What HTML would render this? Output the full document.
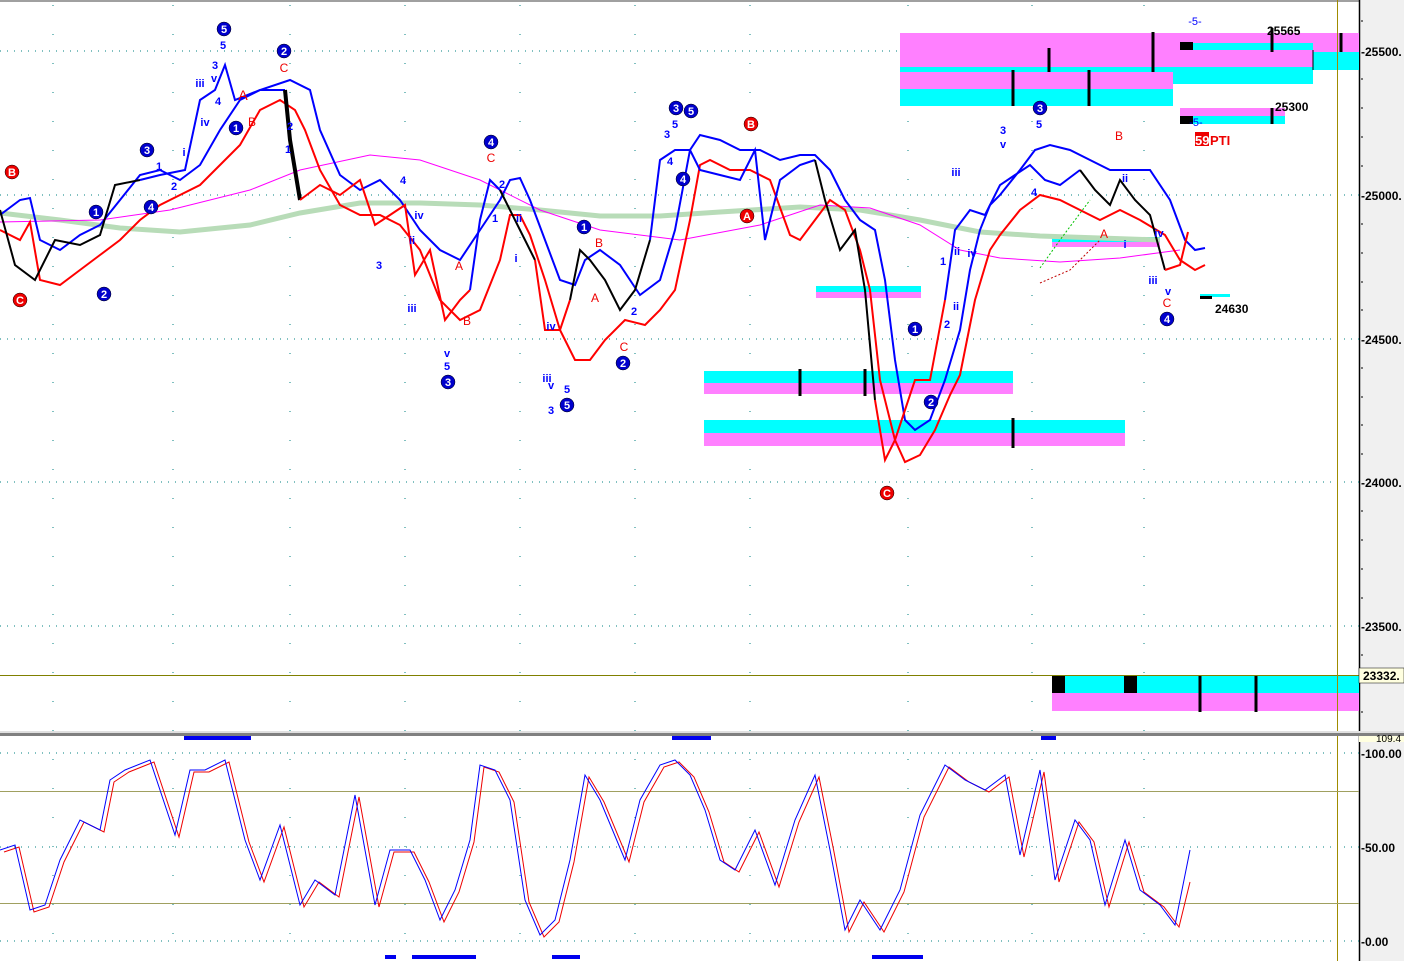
<!DOCTYPE html>
<html><head><meta charset="utf-8"><style>
html,body{margin:0;padding:0;background:#fff;width:1404px;height:961px;overflow:hidden}
svg{display:block}
text{font-family:"Liberation Sans",sans-serif}
</style></head><body>
<svg width="1404" height="961" viewBox="0 0 1404 961" xmlns="http://www.w3.org/2000/svg">
<rect x="0" y="0" width="1404" height="961" fill="#fff"/>
<rect x="0" y="0" width="1404" height="2" fill="#a0a0a0"/>
<rect x="1359" y="0" width="45" height="961" fill="#f0f0f0"/>
<line x1="1359.5" y1="0" x2="1359.5" y2="961" stroke="#000" stroke-width="1.5"/>
<g stroke="#008080" stroke-width="1" stroke-dasharray="1,6">
<line x1="0" y1="51" x2="1359" y2="51"/><line x1="0" y1="195" x2="1359" y2="195"/><line x1="0" y1="339" x2="1359" y2="339"/><line x1="0" y1="482" x2="1359" y2="482"/><line x1="0" y1="626" x2="1359" y2="626"/>
<line x1="0" y1="753" x2="1359" y2="753"/><line x1="0" y1="847" x2="1359" y2="847"/><line x1="0" y1="941" x2="1359" y2="941"/>
</g>
<g stroke="#008080" stroke-width="1" stroke-dasharray="1,28">
<line x1="53" y1="5" x2="53" y2="961"/><line x1="173" y1="5" x2="173" y2="961"/><line x1="290" y1="5" x2="290" y2="961"/><line x1="405" y1="5" x2="405" y2="961"/><line x1="520" y1="5" x2="520" y2="961"/><line x1="635" y1="5" x2="635" y2="961"/><line x1="750" y1="5" x2="750" y2="961"/><line x1="908" y1="5" x2="908" y2="961"/><line x1="1032" y1="5" x2="1032" y2="961"/><line x1="1144" y1="5" x2="1144" y2="961"/>
</g>
<rect x="900" y="33" width="413" height="34" fill="#ff80ff"/>
<rect x="900" y="67" width="273" height="5" fill="#00ffff"/>
<rect x="1173" y="67" width="140" height="17" fill="#00ffff"/>
<rect x="1193" y="43" width="166" height="7" fill="#00ffff"/>
<rect x="1313" y="33" width="46" height="19" fill="#ff80ff"/>
<rect x="1313" y="52" width="46" height="18" fill="#00ffff"/>
<rect x="1180" y="42" width="13" height="8" fill="#000"/>
<rect x="900" y="72" width="273" height="17" fill="#ff80ff"/>
<rect x="900" y="89" width="273" height="17" fill="#00ffff"/>
<rect x="1180" y="108" width="105" height="8" fill="#ff80ff"/>
<rect x="1180" y="116" width="105" height="8" fill="#00ffff"/>
<rect x="1180" y="116" width="13" height="8" fill="#000"/>
<rect x="704" y="371" width="309" height="12" fill="#00ffff"/>
<rect x="704" y="383" width="309" height="11" fill="#ff80ff"/>
<rect x="704" y="420" width="421" height="13" fill="#00ffff"/>
<rect x="704" y="433" width="421" height="13" fill="#ff80ff"/>
<rect x="816" y="286" width="105" height="6" fill="#00ffff"/>
<rect x="816" y="292" width="105" height="6" fill="#ff80ff"/>
<rect x="1052" y="237" width="108" height="5" fill="#00ffff"/>
<rect x="1052" y="242" width="108" height="5" fill="#ff80ff"/>
<rect x="1200" y="294" width="30" height="3" fill="#00ffff"/>
<rect x="1200" y="296" width="12" height="3" fill="#000"/>
<rect x="1052" y="675" width="307" height="18" fill="#00ffff"/>
<rect x="1052" y="693" width="307" height="18" fill="#ff80ff"/>
<rect x="1052" y="675" width="13" height="18" fill="#000"/>
<rect x="1124" y="675" width="13" height="18" fill="#000"/>
<g stroke="#000" stroke-width="3">
<line x1="1013" y1="70" x2="1013" y2="106"/><line x1="1049" y1="48" x2="1049" y2="72"/><line x1="1089" y1="70" x2="1089" y2="106"/><line x1="1153" y1="32" x2="1153" y2="72"/><line x1="1272" y1="28" x2="1272" y2="52"/><line x1="1341" y1="33" x2="1341" y2="52"/><line x1="1272" y1="108" x2="1272" y2="124"/>
<line x1="800" y1="369" x2="800" y2="396"/><line x1="865" y1="369" x2="865" y2="396"/><line x1="1013" y1="418" x2="1013" y2="448"/>
<line x1="1200" y1="675" x2="1200" y2="712"/><line x1="1256" y1="675" x2="1256" y2="712"/>
</g>
<line x1="1313" y1="50" x2="1313" y2="70" stroke="#000" stroke-width="1"/>
<line x1="0" y1="675.5" x2="1359" y2="675.5" stroke="#808000" stroke-width="1"/>
<line x1="1337.5" y1="0" x2="1337.5" y2="961" stroke="#a08c00" stroke-width="1"/>
<polyline fill="none" stroke="#b8dcb8" stroke-width="5" points="0,213 60,220 120,228 180,232 250,225 300,213 360,203 420,203 480,205 540,210 600,216 660,216 720,212 800,207 860,210 920,220 980,232 1040,236 1100,238 1160,240"/>
<polyline fill="none" stroke="#ff00ff" stroke-width="1" points="0,222 100,220 170,210 250,190 300,170 370,155 420,160 480,180 540,210 600,230 680,240 760,225 820,205 870,208 920,225 960,250 1000,258 1060,262 1120,258 1180,250"/>
<polyline fill="none" stroke="#0000ff" stroke-width="2" points="0,215 20,200 30,198 40,240 60,250 80,235 100,225 120,200 140,175 160,170 180,180 200,165 220,130 240,100 260,90 290,80 310,90 320,130 340,175 360,190 380,180 400,200 420,230 440,250 460,260 480,230 500,200 510,180 520,178 530,200 545,240 560,280 575,285 585,260 600,250 620,265 640,295 660,280 675,230 690,150 700,135 720,140 740,150 760,150 780,160 800,155 815,155 830,170 845,200 860,220 875,230 885,280 895,360 905,420 915,430 930,420 945,380 960,330 970,270 980,230 990,205 1000,195 1020,170 1035,150 1050,145 1070,150 1090,160 1110,170 1130,170 1150,170 1170,200 1185,240 1195,250 1205,248"/>
<polyline fill="none" stroke="#ff0000" stroke-width="2" points="0,230 20,240 30,222 40,280 60,285 80,270 100,255 120,240 140,220 160,205 180,195 200,185 220,165 240,145 260,110 280,100 295,110 305,130 320,170 340,205 360,215 380,215 400,225 420,250 440,300 460,320 480,310 500,260 510,215 520,215 530,235 545,280 560,330 575,360 590,360 605,340 625,320 645,325 660,310 675,290 690,220 700,165 710,160 730,170 750,170 770,180 790,235 800,240 815,220 830,200 845,210 860,250 870,290 880,380 895,440 905,462 920,455 935,430 950,395 960,375 975,300 990,250 1000,235 1020,210 1040,195 1060,200 1080,210 1100,220 1120,210 1140,220 1165,235 1180,260 1195,270 1205,265"/>
<polyline fill="none" stroke="#000" stroke-width="2" points="0,210 15,265 35,280 55,240 80,245 100,235 115,185 140,180"/>
<polyline fill="none" stroke="#0000ff" stroke-width="2" points="140,180 160,175 185,170 200,100 215,90 225,65 235,100 260,90 285,90"/>
<polyline fill="none" stroke="#000" stroke-width="4" points="285,90 290,140 300,200"/>
<polyline fill="none" stroke="#ff0000" stroke-width="2" points="300,200 320,185 340,195 360,180 375,225 390,215 405,205 415,275 430,250 445,320 460,300 470,290"/>
<polyline fill="none" stroke="#0000ff" stroke-width="2" points="470,290 480,220 490,180 500,190"/>
<polyline fill="none" stroke="#000" stroke-width="2" points="500,190 520,230 535,260"/>
<polyline fill="none" stroke="#ff0000" stroke-width="2" points="535,260 545,330 560,330 570,300"/>
<polyline fill="none" stroke="#000" stroke-width="2" points="570,300 580,250 590,260 605,280 620,310 635,290 650,240"/>
<polyline fill="none" stroke="#0000ff" stroke-width="2" points="650,240 660,160 675,150 690,150 700,170 720,175 740,180 755,150 765,240 780,180 800,165 815,160"/>
<polyline fill="none" stroke="#000" stroke-width="2" points="815,160 825,200 840,250 855,230 865,290 875,400"/>
<polyline fill="none" stroke="#ff0000" stroke-width="2" points="875,400 885,460 895,440 905,410 915,380 930,380 945,300"/>
<polyline fill="none" stroke="#0000ff" stroke-width="2" points="945,300 955,230 970,210 985,215 1000,185 1015,175 1030,165 1045,180 1060,185 1080,170"/>
<polyline fill="none" stroke="#000" stroke-width="2" points="1080,170 1095,190 1110,205 1120,180 1135,200 1150,215 1165,270"/>
<polyline fill="none" stroke="#ff0000" stroke-width="2" points="1165,270 1180,265 1188,232"/>
<polyline fill="none" stroke="#00c000" stroke-width="1" stroke-dasharray="2,2" points="1040,268 1060,240 1090,200"/>
<polyline fill="none" stroke="#c00000" stroke-width="1" stroke-dasharray="2,2" points="1040,283 1070,270 1100,240"/>
<g font-size="11" font-weight="bold" text-anchor="middle" fill="#fff">
<g fill="#0000cc" stroke="#000" stroke-width="0.5">
<circle cx="224" cy="29" r="7"/><circle cx="284" cy="51" r="7"/><circle cx="147" cy="150" r="7"/><circle cx="96" cy="212" r="7"/><circle cx="151" cy="207" r="7"/><circle cx="104" cy="294" r="7"/><circle cx="236" cy="128" r="7"/><circle cx="491" cy="142" r="7"/><circle cx="448" cy="382" r="7"/><circle cx="567" cy="405" r="7"/><circle cx="584" cy="227" r="7"/><circle cx="623" cy="363" r="7"/><circle cx="676" cy="108" r="7"/><circle cx="691" cy="111" r="7"/><circle cx="683" cy="179" r="7"/><circle cx="915" cy="329" r="7"/><circle cx="931" cy="402" r="7"/><circle cx="1040" cy="108" r="7"/><circle cx="1167" cy="319" r="7"/>
</g>
<g fill="#ee0000" stroke="#000" stroke-width="0.5">
<circle cx="12" cy="172" r="7"/><circle cx="20" cy="300" r="7"/><circle cx="751" cy="124" r="7"/><circle cx="747" cy="216" r="7"/><circle cx="887" cy="493" r="7"/>
</g>
<text x="224" y="33">5</text><text x="284" y="55">2</text><text x="147" y="154">3</text><text x="96" y="216">1</text><text x="151" y="211">4</text><text x="104" y="298">2</text><text x="236" y="132">1</text><text x="491" y="146">4</text><text x="448" y="386">3</text><text x="567" y="409">5</text><text x="584" y="231">1</text><text x="623" y="367">2</text><text x="676" y="112">3</text><text x="691" y="115">5</text><text x="683" y="183">4</text><text x="915" y="333">1</text><text x="931" y="406">2</text><text x="1040" y="112">3</text><text x="1167" y="323">4</text>
<text x="12" y="176">B</text><text x="20" y="304">C</text><text x="751" y="128">B</text><text x="747" y="220">A</text><text x="887" y="497">C</text>
</g>
<g font-size="11" font-weight="bold" fill="#0000ff" text-anchor="middle">
<text x="223" y="49">5</text><text x="215" y="69">3</text><text x="214" y="82">v</text><text x="200" y="87">iii</text><text x="218" y="105">4</text><text x="205" y="126">iv</text><text x="159" y="170">1</text><text x="174" y="190">2</text><text x="184" y="156">i</text><text x="290" y="130">2</text><text x="288" y="153">1</text>
<text x="403" y="184">4</text><text x="419" y="219">iv</text><text x="412" y="244">ii</text><text x="379" y="269">3</text><text x="412" y="312">iii</text><text x="447" y="357">v</text><text x="447" y="370">5</text><text x="502" y="188">2</text><text x="495" y="222">1</text><text x="519" y="222">ii</text><text x="516" y="262">i</text>
<text x="551" y="330">iv</text><text x="547" y="382">iii</text><text x="551" y="389">v</text><text x="567" y="393">5</text><text x="551" y="414">3</text><text x="634" y="315">2</text>
<text x="667" y="138">3</text><text x="675" y="128">5</text><text x="670" y="165">4</text>
<text x="943" y="265">1</text><text x="947" y="328">2</text><text x="957" y="255">ii</text><text x="956" y="310">ii</text><text x="972" y="257">iv</text><text x="956" y="176">iii</text><text x="1003" y="134">3</text><text x="1003" y="148">v</text><text x="1039" y="128">5</text><text x="1034" y="196">4</text><text x="1125" y="182">ii</text><text x="1125" y="248">i</text><text x="1159" y="237">iv</text><text x="1153" y="284">iii</text><text x="1168" y="295">v</text><text x="1195" y="25" font-weight="normal">-5-</text><text x="1196" y="126" font-weight="normal">-5-</text>
</g>
<g font-size="12" fill="#ee0000" text-anchor="middle">
<text x="284" y="72">C</text><text x="243" y="100" font-size="14">A</text><text x="252" y="126">B</text><text x="491" y="162">C</text><text x="459" y="270">A</text><text x="467" y="325">B</text><text x="599" y="247">B</text><text x="595" y="302">A</text><text x="624" y="351">C</text><text x="1119" y="140">B</text><text x="1104" y="238">A</text><text x="1167" y="307">C</text>
</g>
<rect x="1195" y="132" width="14" height="14" fill="#ee0000"/>
<text x="1195" y="145" font-size="13" font-weight="bold" fill="#fff">59</text>
<text x="1210" y="145" font-size="13" font-weight="bold" fill="#ee0000">PTI</text>
<g font-size="12" font-weight="bold" fill="#000">
<text x="1267" y="35">25565</text><text x="1275" y="111">25300</text><text x="1215" y="313">24630</text>
</g>
<g font-size="12" font-weight="bold" fill="#000">
<text x="1361" y="56">-25500.</text><text x="1361" y="200">-25000.</text><text x="1361" y="344">-24500.</text><text x="1361" y="487">-24000.</text><text x="1361" y="631">-23500.</text>
<text x="1361" y="758">-100.00</text><text x="1361" y="852">-50.00</text><text x="1361" y="946">-0.00</text>
</g>
<g stroke="#000" stroke-width="1">
<line x1="1361" y1="21" x2="1363" y2="21"/><line x1="1361" y1="79" x2="1363" y2="79"/><line x1="1361" y1="108" x2="1363" y2="108"/><line x1="1361" y1="137" x2="1363" y2="137"/><line x1="1361" y1="166" x2="1363" y2="166"/><line x1="1361" y1="224" x2="1363" y2="224"/><line x1="1361" y1="253" x2="1363" y2="253"/><line x1="1361" y1="282" x2="1363" y2="282"/><line x1="1361" y1="310" x2="1363" y2="310"/><line x1="1361" y1="368" x2="1363" y2="368"/><line x1="1361" y1="397" x2="1363" y2="397"/><line x1="1361" y1="425" x2="1363" y2="425"/><line x1="1361" y1="454" x2="1363" y2="454"/><line x1="1361" y1="511" x2="1363" y2="511"/><line x1="1361" y1="540" x2="1363" y2="540"/><line x1="1361" y1="569" x2="1363" y2="569"/><line x1="1361" y1="598" x2="1363" y2="598"/><line x1="1361" y1="655" x2="1363" y2="655"/><line x1="1361" y1="712" x2="1363" y2="712"/>
</g>
<rect x="1359" y="668" width="45" height="15" fill="#ffffe0" stroke="#000" stroke-width="0.5"/>
<text x="1363" y="680" font-size="12" font-weight="bold" fill="#000">23332.</text>
<rect x="0" y="731" width="1404" height="2" fill="#e0e0e0"/>
<rect x="0" y="733" width="1404" height="3" fill="#808080"/>
<rect x="1359" y="736" width="45" height="6" fill="#ffffe0"/>
<text x="1376" y="742" font-size="10" fill="#000">109.4</text>
<line x1="0" y1="791.5" x2="1359" y2="791.5" stroke="#a0a060" stroke-width="1"/>
<line x1="0" y1="903.5" x2="1359" y2="903.5" stroke="#a0a060" stroke-width="1"/>
<g fill="#0000ee">
<rect x="184" y="736" width="67" height="4"/><rect x="672" y="736" width="39" height="4"/><rect x="1041" y="736" width="15" height="4"/>
<rect x="385" y="955" width="11" height="4"/><rect x="412" y="955" width="64" height="4"/><rect x="552" y="955" width="28" height="4"/><rect x="872" y="955" width="51" height="4"/>
</g>
<polyline fill="none" stroke="#ee0000" stroke-width="1" transform="translate(4,2)" points="0,850 15,845 30,910 45,905 60,860 80,820 100,830 110,780 125,770 150,760 175,835 190,770 205,770 225,760 245,840 260,880 280,825 300,905 315,880 335,895 355,795 375,905 390,850 410,850 425,880 440,920 455,890 470,840 480,765 495,770 510,800 525,900 540,935 555,920 570,860 585,775 600,800 625,860 640,800 660,765 675,760 690,775 705,810 720,860 735,870 755,830 775,885 795,820 815,775 830,850 845,930 860,900 880,930 900,890 920,815 945,765 965,780 985,790 1005,775 1020,855 1040,770 1055,880 1075,820 1090,840 1105,905 1125,840 1140,890 1160,905 1175,925 1186,880"/>
<polyline fill="none" stroke="#0000ff" stroke-width="1" points="0,850 15,845 30,910 45,905 60,860 80,820 100,830 110,780 125,770 150,760 175,835 190,770 205,770 225,760 245,840 260,880 280,825 300,905 315,880 335,895 355,795 375,905 390,850 410,850 425,880 440,920 455,890 470,840 480,765 495,770 510,800 525,900 540,935 555,920 570,860 585,775 600,800 625,860 640,800 660,765 675,760 690,775 705,810 720,860 735,870 755,830 775,885 795,820 815,775 830,850 845,930 860,900 880,930 900,890 920,815 945,765 965,780 985,790 1005,775 1020,855 1040,770 1055,880 1075,820 1090,840 1105,905 1125,840 1140,890 1160,905 1175,925 1190,850"/>
</svg>
</body></html>
